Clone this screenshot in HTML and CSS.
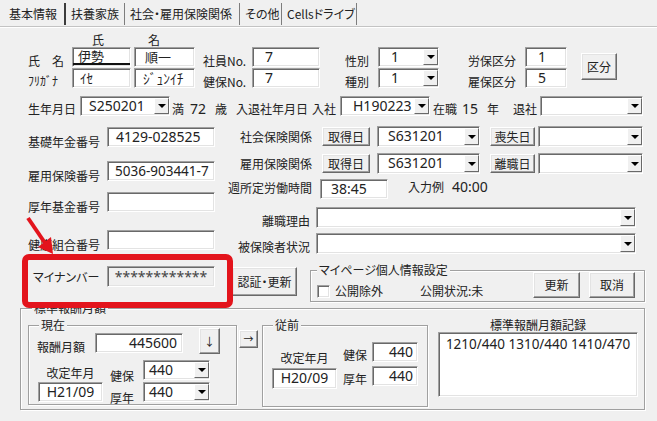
FILE: index.html
```html
<!DOCTYPE html>
<html lang="ja">
<head>
    <meta charset="UTF-8">
    <meta name="viewport" content="width=device-width, initial-scale=1.0">
    <title>基本情報</title>
    <link rel="stylesheet" href="styles.css">
</head>
<body>

    <nav class="tabs">
        <span class="tab">基本情報</span>
        <span class="tab">扶養家族</span>
        <span class="tab">社会・雇用保険関係</span>
        <span class="tab">その他</span>
        <span class="tab">Cellsドライブ</span>
    </nav>

    <!-- 氏名・社員番号・区分 -->
    <div class="names">
        <div class="name-grid">
            <span></span>
            <span class="hd hd-sur">氏</span>
            <span class="hd hd-given">名</span>
            <span class="lbl low">氏　名</span>
            <div class="tb jp ime-box"><span class="ime">伊勢</span></div>
            <div class="tb jp given">順一</div>
            <span class="lbl low kana-lbl">ﾌﾘｶﾞﾅ</span>
            <div class="tb jp kana-sur">ｲｾ</div>
            <div class="tb jp kana-given">ｼﾞｭﾝｲﾁ</div>
        </div>
        <div class="pair pair-emp">
            <span class="lbl low">社員No.</span>
            <div class="tb pad-lg">7</div>
            <span class="lbl low">健保No.</span>
            <div class="tb pad-lg">7</div>
        </div>
        <div class="pair pair-sex">
            <span class="lbl low">性別</span>
            <div class="cb"><span class="val pad-lg">1</span><i class="dd"></i></div>
            <span class="lbl low">種別</span>
            <div class="cb"><span class="val pad-lg">1</span><i class="dd"></i></div>
        </div>
        <div class="pair pair-ins">
            <span class="lbl low">労保区分</span>
            <div class="tb pad-lg">1</div>
            <span class="lbl low">雇保区分</span>
            <div class="tb pad-lg">5</div>
        </div>
        <div class="btn btn-kubun">区分</div>
    </div>

    <!-- 生年月日・入退社 -->
    <div class="birth">
        <span class="lbl seg">生年月日</span>
        <div class="cb"><span class="val">S250201</span><i class="dd"></i></div>
        <span class="seg seg-age">満<span class="num age">72</span>歳</span>
        <span class="seg seg-join">入退社年月日<span class="join">入社</span></span>
        <div class="cb"><span class="val pad-lg">H190223</span><i class="dd"></i></div>
        <span class="seg seg-years">在職<span class="num years">15</span>年<span class="leave">退社</span></span>
        <div class="cb"><span class="val"></span><i class="dd"></i></div>
    </div>

    <div class="mid">
        <div class="numbers">
            <div class="field"><span class="lbl">基礎年金番号</span><div class="tb">4129-028525</div></div>
            <div class="field"><span class="lbl">雇用保険番号</span><div class="tb long">5036-903441-7</div></div>
            <div class="field"><span class="lbl">厚年基金番号</span><div class="tb"></div></div>
            <div class="field"><span class="lbl">健康組合番号</span><div class="tb"></div></div>
        </div>

        <div class="relations">
            <div class="rel rel-social">
                <span class="rel-lbl">社会保険関係</span>
                <div class="btn btn-date">取得日</div>
                <div class="cb cb-date"><span class="val pad-md">S631201</span><i class="dd"></i></div>
                <div class="btn btn-lost">喪失日</div>
                <div class="cb cb-end"><span class="val"></span><i class="dd"></i></div>
            </div>
            <div class="rel rel-emp">
                <span class="rel-lbl">雇用保険関係</span>
                <div class="btn btn-date">取得日</div>
                <div class="cb cb-date"><span class="val pad-md">S631201</span><i class="dd"></i></div>
                <div class="btn btn-lost">離職日</div>
                <div class="cb cb-end"><span class="val"></span><i class="dd"></i></div>
            </div>
            <div class="rel rel-week">
                <span class="rel-lbl">週所定労働時間</span>
                <div class="tb hours">38:45</div>
                <span class="example">入力例<span class="num">40:00</span></span>
            </div>
            <div class="rel rel-wide">
                <span class="rel-lbl">離職理由</span>
                <div class="cb cb-wide"><span class="val"></span><i class="dd"></i></div>
            </div>
            <div class="rel rel-wide">
                <span class="rel-lbl">被保険者状況</span>
                <div class="cb cb-wide"><span class="val"></span><i class="dd"></i></div>
            </div>
        </div>
    </div>

    <!-- マイナンバー -->
    <div class="mynumber">
        <span class="lbl">マイナンバー</span>
        <div class="tb masked">************</div>
        <div class="btn btn-auth">認証・更新</div>
        <div class="grp mypage">
            <span class="cap">マイページ個人情報設定</span>
            <span class="check"></span>
            <span class="check-lbl">公開除外</span>
            <span class="status">公開状況:未</span>
            <div class="btn btn-upd">更新</div>
            <div class="btn btn-cancel">取消</div>
        </div>
    </div>

    <!-- 標準報酬月額 -->
    <div class="grp std">
        <span class="cap">標準報酬月額</span>

        <div class="grp now">
            <span class="cap">現在</span>
            <div class="now-top">
                <span class="lbl">報酬月額</span>
                <div class="tb amount">445600</div>
                <div class="btn btn-down">↓</div>
            </div>
            <div class="now-bottom">
                <div class="rev">
                    <span class="lbl">改定年月</span>
                    <div class="tb ym">H21/09</div>
                </div>
                <div class="grades">
                    <div class="grade"><span class="lbl">健保</span><div class="cb cb-grade"><span class="val">440</span><i class="dd"></i></div></div>
                    <div class="grade"><span class="lbl">厚年</span><div class="cb cb-grade"><span class="val">440</span><i class="dd"></i></div></div>
                </div>
            </div>
        </div>

        <div class="btn btn-copy">→</div>

        <div class="grp prev">
            <span class="cap">従前</span>
            <div class="rev">
                <span class="lbl">改定年月</span>
                <div class="tb ym">H20/09</div>
            </div>
            <div class="grades">
                <div class="grade"><span class="lbl">健保</span><div class="tb grade-val">440</div></div>
                <div class="grade"><span class="lbl">厚年</span><div class="tb grade-val">440</div></div>
            </div>
        </div>

        <div class="history">
            <span class="history-lbl">標準報酬月額記録</span>
            <div class="tb history-list">1210/440 1310/440 1410/470</div>
        </div>
    </div>

    <!-- 注記 -->
    <div class="callout"></div>
    <svg class="pointer" width="40" height="48" viewBox="0 0 40 48">
        <line x1="8" y1="6" x2="25" y2="31" stroke="#e3141c" stroke-width="4"/>
        <polygon points="33,42 18,35 31,25" fill="#e3141c"/>
    </svg>

</body>
</html>
```

FILE: styles.css
```css
* {
    box-sizing: border-box;
}
body {
    margin: 0;
    width: 657px;
    height: 421px;
    overflow: hidden;
    position: relative;
    background-color: #f0f0f0;
    color: #222;
    font-family: "Noto Sans CJK JP", sans-serif;
    font-size: 12px;
    line-height: 16px;
    font-feature-settings: "palt";
}

/* タブ */
.tabs {
    display: flex;
    height: 27px;
    padding: 3px 0 0 4px;
    border-bottom: 1px solid #c3c3c3;
    box-shadow: 0 1px 0 #fff;
}
.tab {
    height: 22px;
    line-height: 22px;
    padding-left: 5px;
    border-right: 1px solid #7d7d7d;
    white-space: nowrap;
}
.tab:nth-child(1) { width: 62px; border-right: 2px solid #3c3c3c; }
.tab:nth-child(2) { width: 59px; }
.tab:nth-child(3) { width: 115px; }
.tab:nth-child(4) { width: 42px; }
.tab:nth-child(5) { width: 75px; }

/* 共通部品 */
.lbl {
    white-space: nowrap;
}
.low {
    padding-top: 6px;
}
.num {
    font-family: "Noto Sans", sans-serif;
    font-size: 14px;
}
.tb, .cb {
    height: 20px;
    background-color: #fff;
    border: 1px solid;
    border-color: #a0a0a0 #fff #fff #a0a0a0;
    box-shadow: inset 1px 1px 0 #696969, inset -1px -1px 0 #e3e3e3;
    font-family: "Noto Sans", "Noto Sans CJK JP", sans-serif;
    font-size: 14px;
    line-height: 18px;
    padding-left: 8px;
    white-space: nowrap;
    overflow: hidden;
}
.cb {
    display: flex;
    padding: 1px 0 1px 0;
}
.cb .val {
    flex: 1;
    padding-left: 8px;
    line-height: 16px;
}
.dd {
    flex: none;
    width: 15px;
    height: 100%;
    display: flex;
    align-items: center;
    justify-content: center;
    background-color: #f0f0f0;
    border: 1px solid;
    border-color: #fff #696969 #696969 #fff;
}
.dd::after {
    content: "";
    border-left: 4px solid transparent;
    border-right: 4px solid transparent;
    border-top: 4px solid #000;
}
.tb.pad-lg, .cb .val.pad-lg {
    padding-left: 12px;
}
.cb .val.pad-md {
    padding-left: 10px;
}
.jp {
    font-family: "Noto Sans CJK JP", sans-serif;
    font-size: 13px;
}
.btn {
    display: flex;
    align-items: center;
    justify-content: center;
    background-color: #f0f0f0;
    border: 1px solid;
    border-color: #fff #696969 #696969 #fff;
    box-shadow: inset -1px -1px 0 #a0a0a0, inset 1px 1px 0 #e3e3e3;
    white-space: nowrap;
}
.grp {
    position: relative;
    border: 1px solid #a0a0a0;
    box-shadow: inset 1px 1px 0 #fff, 1px 1px 0 #fff;
}
.grp > .cap {
    position: absolute;
    top: -9px;
    padding: 0 2px;
    background-color: #f0f0f0;
    white-space: nowrap;
}

/* 氏名ブロック */
.names {
    display: flex;
    align-items: flex-start;
    margin-top: 6px;
    padding-left: 28px;
}
.name-grid {
    display: grid;
    grid-template-columns: 41px 59px 61px;
    grid-template-rows: 13px 20px 20px;
    column-gap: 3px;
    row-gap: 1px;
}
.hd {
    line-height: 13px;
}
.hd-sur { padding-left: 20px; }
.hd-given { padding-left: 14px; }
.ime-box {
    padding-left: 0;
}
.ime {
    display: block;
    height: 17px;
    padding-left: 5px;
    line-height: 15px;
    border-bottom: 2px solid #111;
}
.given { padding-left: 10px; }
.kana-sur { padding-left: 7px; }
.kana-given { padding-left: 8px; font-size: 13.5px; }
.kana-lbl { padding-top: 5px; }
.pair {
    display: grid;
    grid-template-rows: 20px 20px;
    row-gap: 1px;
    margin-top: 14px;
}
.pair-emp { grid-template-columns: 57px 68px; }
.pair-emp .lbl { padding-left: 8px; }
.pair-sex { grid-template-columns: 58px 61px; }
.pair-sex .lbl { padding-left: 25px; }
.pair-ins { grid-template-columns: 86px 42px; }
.pair-ins .lbl { padding-left: 29px; }
.btn-kubun {
    width: 36px;
    height: 27px;
    margin: 20px 0 0 14px;
}

/* 生年月日 */
.birth {
    display: grid;
    grid-template-columns: 52px 90px 66px 104px 90px 110px 103px;
    height: 20px;
    margin-top: 8px;
    padding-left: 28px;
}
.seg {
    padding-top: 5px;
    white-space: nowrap;
}
.seg-age { padding-left: 2px; }
.age { margin: 0 9px 0 6px; line-height: 16px; }
.join { margin-left: 4px; }
.seg-years { padding-left: 3px; }
.years { margin: 0 9px 0 5px; line-height: 16px; }
.leave { margin-left: 14px; }

/* 番号・保険関係 */
.mid {
    display: flex;
    align-items: flex-start;
    margin-top: 10px;
    padding-left: 28px;
}
.numbers {
    width: 187px;
}
.field {
    display: flex;
    height: 20px;
}
.field .lbl {
    width: 79px;
    padding-top: 7px;
}
.field .tb {
    width: 108px;
}
.field .tb.long {
    padding-left: 7px;
    font-size: 13.5px;
}
.field:nth-child(1) { margin-top: 1px; }
.field:nth-child(2) { margin-top: 14px; }
.field:nth-child(3) { margin-top: 11px; }
.field:nth-child(4) { margin-top: 18px; }

.relations {
    width: 421px;
    margin-left: 12px;
}
.rel {
    display: flex;
    align-items: flex-start;
    height: 20px;
}
.rel-lbl {
    width: 85px;
    text-align: right;
    white-space: nowrap;
}
.rel-social { height: 21px; }
.rel-social .rel-lbl, .rel-emp .rel-lbl { padding-top: 3px; }
.rel-emp { margin-top: 6px; }
.btn-date {
    width: 48px;
    height: 19px;
    margin: 1px 0 0 10px;
}
.cb-date {
    width: 103px;
    height: 21px;
    margin-left: 7px;
}
.btn-lost {
    width: 45px;
    height: 19px;
    margin: 1px 0 0 10px;
}
.cb-end {
    width: 105px;
    height: 21px;
    margin-left: 3px;
}
.rel-week { margin-top: 6px; }
.rel-week .rel-lbl { padding-top: 1px; }
.hours {
    width: 68px;
    margin-left: 8px;
    padding-left: 10px;
}
.example {
    margin-left: 20px;
    white-space: nowrap;
}
.example .num {
    margin-left: 8px;
}
.rel-wide {
    height: 21px;
    margin-top: 8px;
}
.rel-wide + .rel-wide { margin-top: 5px; }
.rel-wide .rel-lbl {
    padding: 6px 2px 0 0;
}
.cb-wide {
    width: 320px;
    height: 21px;
    margin-left: 4px;
}

/* マイナンバー */
.mynumber {
    display: flex;
    align-items: flex-start;
    margin-top: 8px;
    padding-left: 33px;
}
.mynumber > .lbl {
    width: 74px;
    padding-top: 7px;
}
.masked {
    width: 108px;
    height: 21px;
    margin-top: 4px;
    padding-left: 0;
    background-color: #f0f0f0;
    color: #444;
    text-align: center;
    line-height: 19px;
}
.btn-auth {
    width: 65px;
    height: 29px;
    margin: 5px 0 0 17px;
}
.mypage {
    display: flex;
    align-items: flex-start;
    width: 335px;
    height: 32px;
    margin: 8px 0 0 13px;
    padding: 0 9px 0 6px;
}
.mypage .cap { left: 6px; }
.check {
    width: 13px;
    height: 13px;
    margin-top: 14px;
    background-color: #fff;
    border: 1px solid;
    border-color: #a0a0a0 #fff #fff #a0a0a0;
    box-shadow: inset 1px 1px 0 #696969, inset -1px -1px 0 #e3e3e3;
}
.check-lbl {
    margin: 12px 0 0 5px;
}
.status {
    margin: 12px 0 0 37px;
}
.btn-upd {
    width: 47px;
    height: 26px;
    margin: 1px 0 0 auto;
}
.btn-cancel {
    width: 46px;
    height: 26px;
    margin: 1px 0 0 9px;
}

/* 標準報酬月額 */
.std {
    display: flex;
    align-items: flex-start;
    width: 625px;
    height: 102px;
    margin: 6px 0 0 20px;
    padding: 16px 0 0 7px;
}
.std > .cap { left: 11px; }
.now {
    width: 209px;
    height: 80px;
    padding: 2px 0 0 8px;
}
.now > .cap, .prev > .cap { left: 10px; }
.now-top {
    display: flex;
    align-items: flex-start;
    height: 27px;
}
.now-top .lbl {
    width: 58px;
    padding-top: 11px;
}
.amount {
    width: 88px;
    margin-top: 5px;
    padding: 0 5px 0 0;
    text-align: right;
}
.btn-down {
    width: 21px;
    height: 26px;
    margin-left: 16px;
    font-size: 11px;
}
.now-bottom {
    display: flex;
    align-items: flex-start;
    margin-top: 5px;
}
.rev {
    width: 65px;
    text-align: center;
}
.rev .lbl {
    display: block;
}
.ym {
    padding-left: 0;
    text-align: center;
}
.now .rev { margin-left: 1px; }
.now .rev .lbl { margin-top: 5px; }
.now .ym { margin-top: 1px; }
.grade {
    display: flex;
    align-items: flex-start;
    height: 20px;
}
.now .grades { margin-left: 7px; }
.now .grade + .grade { margin-top: 2px; }
.now .grade .lbl {
    width: 33px;
    padding-top: 8px;
}
.cb-grade {
    width: 67px;
}
.cb-grade .val { padding-left: 5px; }
.btn-copy {
    width: 19px;
    height: 18px;
    margin: 5px 0 0 2px;
    font-size: 10px;
}
.prev {
    display: flex;
    align-items: flex-start;
    width: 166px;
    height: 82px;
    margin-left: 4px;
    padding-left: 9px;
}
.prev .rev { margin-top: 24px; }
.prev .ym { margin-top: 2px; height: 21px; }
.prev .grades { margin: 16px 0 0 6px; }
.prev .grade + .grade { margin-top: 4px; }
.prev .grade .lbl {
    width: 29px;
    padding-top: 5px;
}
.grade-val {
    width: 46px;
    padding: 0 4px 0 0;
    text-align: right;
}
.history {
    width: 200px;
    margin-left: 10px;
}
.history-lbl {
    display: block;
    margin-top: -8px;
    text-align: center;
}
.history-list {
    height: 65px;
    margin-top: -1px;
    padding: 3px 0 0 0;
    font-size: 13.5px;
    line-height: 16px;
    text-align: center;
}

/* 赤枠と矢印 */
.callout {
    position: absolute;
    left: 22px;
    top: 254px;
    width: 211px;
    height: 54px;
    border: 6px solid #e3141c;
    border-radius: 7px;
}
.pointer {
    position: absolute;
    left: 20px;
    top: 212px;
}
```
